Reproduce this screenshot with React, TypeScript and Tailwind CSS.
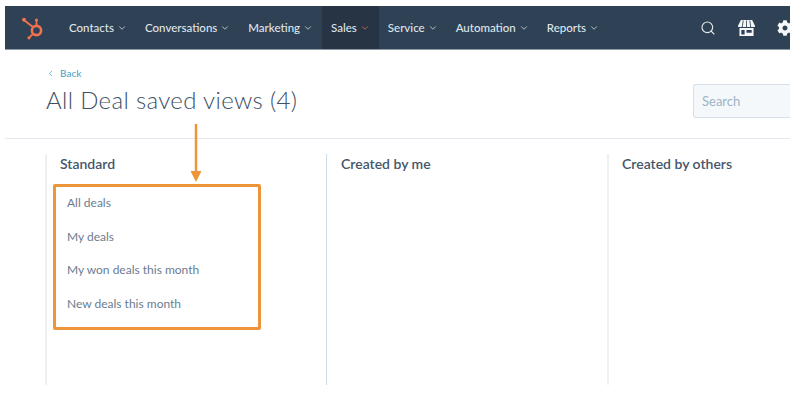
import React from 'react';
import { ChevronDown, ChevronLeft, Search } from 'lucide-react';
import { FaCog } from 'react-icons/fa';

const navItems = ['Contacts', 'Conversations', 'Marketing', 'Sales', 'Service', 'Automation', 'Reports'];

const Sprocket = () => (
  <svg viewBox="0 0 24 24" className="w-[24px] h-[24px]" fill="none" stroke="#f2714e">
    <circle cx="15.5" cy="14.5" r="4.6" strokeWidth="2.6" />
    <path d="M15.5 9.5V4.5M12 11L3.5 4.5M12 18l-3.6 3.4" strokeWidth="1.8" strokeLinecap="round" />
    <circle cx="15.5" cy="4" r="1.6" fill="#f2714e" stroke="none" />
    <circle cx="3" cy="3.8" r="2" fill="#f2714e" stroke="none" />
    <circle cx="8" cy="21.8" r="1.6" fill="#f2714e" stroke="none" />
  </svg>
);

const Store = () => (
  <svg viewBox="0 0 18 17" className="w-[17px] h-[16px]" fill="#f4f6f8">
    <path d="M3 0h12l3 6v1.500H0V6z" />
    <path d="M1.500 8.500h15V17h-15zM3.500 10.500V15.500h3.500V10.500zM9 10.500V13.500h5.500V10.500z" fillRule="evenodd" />
    <path d="M5.500 0.500L4.500 7.500M9 0.500V7.500M12.500 0.500L13.500 7.500" stroke="#2f4154" strokeWidth="0.9" />
  </svg>
);

const App: React.FC = () => {
  return (
    <div className="relative w-[797px] h-[415px] bg-white overflow-hidden font-['Lato',sans-serif]">
      <div className="pt-[6px] pl-[5px] w-[790px]">
        <nav className="h-[44px] bg-[#2f4154] border-b border-[#8d99a6] flex items-center overflow-hidden">
          <div className="w-[55px] pl-[16px] shrink-0">
            <Sprocket />
          </div>
          <div className="flex items-center h-full">
            {navItems.map((item) => {
              const active = item === 'Sales';
              return (
                <div
                  key={item}
                  className={`h-full flex items-center gap-[3px] px-[9px] text-[11.5px] font-medium text-[#dfe5ec] ${active ? 'bg-[#263444]' : ''}`}
                >
                  {item}
                  <ChevronDown className={`w-[10px] h-[10px] ${active ? 'text-[#f2714e]' : 'text-[#e2e8ef]'}`} strokeWidth={1.8} />
                </div>
              );
            })}
          </div>
          <div className="ml-auto flex items-center gap-[22px] -mr-[3px]">
            <Search className="w-[16px] h-[16px] text-[#e6ebf0]" strokeWidth={1.7} />
            <Store />
            <FaCog className="w-[16px] h-[16px] text-[#f4f6f8]" />
          </div>
        </nav>

        <div className="border-b border-[#e3e9f0] h-[89px] pl-[41px] flex justify-between">
          <div>
            <div className="mt-[17px] flex items-center gap-[3px] text-[10px] leading-[12px] font-medium text-[#4ea5c5]">
              <ChevronLeft className="w-[9px] h-[9px]" strokeWidth={2} />
              <span className="ml-[2px]">Back</span>
            </div>
            <h1 className="mt-[5px] text-[24px] leading-[32px] font-light text-[#3d5064] tracking-[0.35px]">All Deal saved views (4)</h1>
          </div>
          <div className="mt-[34px] w-[97px] h-[34px] bg-[#f5f8fa] border border-r-0 border-[#d6e0ea] rounded-l-[3px] pl-[8px] pt-[1px] flex items-center text-[13px] text-[#9fb3c6]">
            Search
          </div>
        </div>

        <div className="flex pl-[40px] pt-[15px] h-[246px]">
          {['Standard', 'Created by me', 'Created by others'].map((title, i) => (
            <div
              key={title}
              className={`w-[281px] shrink-0 h-full ${i === 1 ? 'border-l border-[#cfdce8] pl-[14px]' : 'border-l-2 border-[#eef1f4] pl-[13px]'}`}
            >
              <h2 className="text-[14px] leading-[20px] font-semibold text-[#44566a]">{title}</h2>
              {i === 0 && (
                <ul className="mt-[20px] pl-[7px] text-[12px] text-[#6b7c8f] flex flex-col gap-[15.600px]">
                  <li className="leading-[18px]">All deals</li>
                  <li className="leading-[18px]">My deals</li>
                  <li className="leading-[18px]">My won deals this month</li>
                  <li className="leading-[18px]">New deals this month</li>
                </ul>
              )}
            </div>
          ))}
        </div>
      </div>

      {/* annotation */}
      <div className="absolute left-[53px] top-[184px] w-[208px] h-[146px] border-[3px] border-[#ec9539] rounded-[2px]" />
      <svg className="absolute left-[190px] top-[124px] w-[12px] h-[59px]" viewBox="0 0 12 59">
        <path d="M6 0V50" stroke="#ec9539" strokeWidth="2.500" />
        <path d="M0.500 47H11.500L6 58z" fill="#ec9539" />
      </svg>
    </div>
  );
};

export default App;
